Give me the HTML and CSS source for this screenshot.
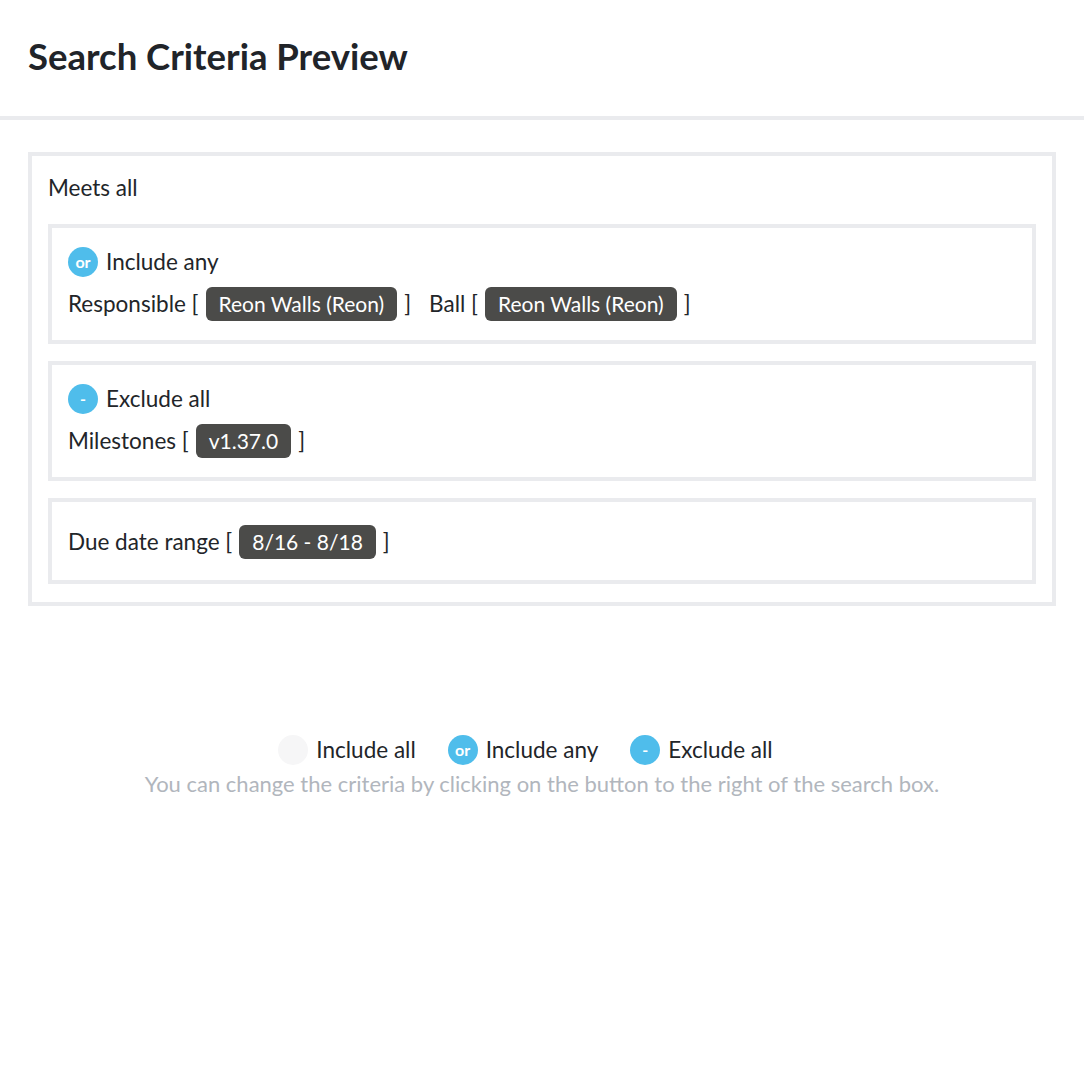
FILE: index.html
```html
<!DOCTYPE html>
<html lang="en">
<head>
  <meta charset="UTF-8" />
  <meta name="viewport" content="width=device-width, initial-scale=1.0" />
  <title>Search Criteria Preview</title>
  <link rel="stylesheet" href="styles.css">
</head>
<body>
  <header class="header">
    <h1>Search Criteria Preview</h1>
  </header>

  <main class="content">
    <div class="criteria">
      <div class="criteria-title">Meets all</div>

      <div class="group">
        <div class="group-head"><span class="badge">or</span>Include any</div>
        <div class="terms">
          <span class="term">Responsible [<span class="chip">Reon Walls (Reon)</span>]</span>
          <span class="term">Ball [<span class="chip">Reon Walls (Reon)</span>]</span>
        </div>
      </div>

      <div class="group">
        <div class="group-head"><span class="badge">-</span>Exclude all</div>
        <div class="terms">
          <span class="term">Milestones [<span class="chip">v1.37.0</span>]</span>
        </div>
      </div>

      <div class="group group-plain">
        <div class="terms">
          <span class="term">Due date range [<span class="chip">8/16 - 8/18</span>]</span>
        </div>
      </div>
    </div>

    <div class="legend">
      <span class="legend-item"><span class="badge badge-empty"></span>Include all</span>
      <span class="legend-item"><span class="badge">or</span>Include any</span>
      <span class="legend-item"><span class="badge">-</span>Exclude all</span>
    </div>
    <p class="hint">You can change the criteria by clicking on the button to the right of the search box.</p>
  </main>
</body>
</html>
```

FILE: styles.css
```css
body {
  font-family: 'Lato', 'Noto Sans', sans-serif;
  color: #222529;
  background: #ffffff;
  margin: 0;
  padding: 0;
}
.header {
  height: 112px;
  padding: 0 28px 4px;
  display: flex;
  align-items: center;
  border-bottom: 4px solid #eaebee;
}
h1 {
  margin: 0;
  font-size: 36.5px;
  font-weight: 700;
  color: #212429;
}
.content {
  padding: 32px 28px 0;
}
.criteria {
  border: 4px solid #eaebee;
  padding: 16px 16px 18px;
}
.criteria-title {
  font-size: 22.5px;
  line-height: 32px;
  margin-bottom: 20px;
}
.group {
  border: 4px solid #eaebee;
  padding: 16px;
  margin-bottom: 17px;
}
.group:last-child {
  margin-bottom: 0;
}
.group-plain {
  padding-top: 20px;
  padding-bottom: 18px;
}
.group-head {
  display: flex;
  align-items: center;
  font-size: 22.5px;
  line-height: 36px;
  margin-bottom: 4px;
}
.badge {
  width: 30px;
  height: 30px;
  border-radius: 50%;
  background: #4fbdeb;
  color: #ffffff;
  font-size: 16px;
  font-weight: 700;
  line-height: 30px;
  text-align: center;
  margin-right: 8px;
  flex-shrink: 0;
}
.badge-empty {
  background: #f6f6f7;
}
.terms {
  display: flex;
  align-items: center;
  gap: 18px;
  font-size: 22.5px;
  line-height: 40px;
}
.term {
  display: flex;
  align-items: center;
  white-space: pre;
}
.chip {
  display: inline-block;
  background: #4b4b49;
  color: #ffffff;
  font-size: 21px;
  line-height: 34px;
  padding: 0 13px;
  border-radius: 6px;
  margin: 0 7px;
}
.legend {
  display: flex;
  justify-content: center;
  align-items: center;
  gap: 32px;
  margin-top: 126px;
  padding-right: 33px;
  font-size: 22.5px;
  line-height: 36px;
}
.legend-item {
  display: flex;
  align-items: center;
}
.hint {
  margin: 1px 0 0;
  text-align: center;
  font-size: 22px;
  line-height: 30px;
  color: #b1b6bd;
}
```
